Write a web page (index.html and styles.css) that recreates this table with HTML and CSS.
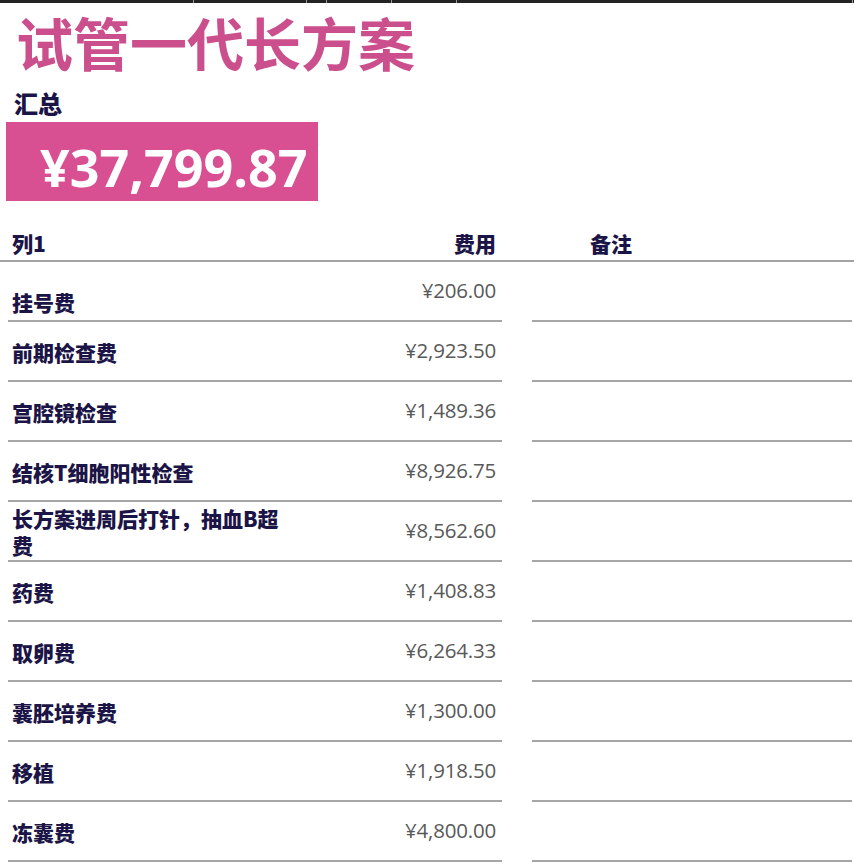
FILE: index.html
```html
<!DOCTYPE html>
<html lang="zh">
<head>
<meta charset="utf-8">
<link rel="stylesheet" href="styles.css">
</head>
<body>
<div class="topbar">
  <span class="seg s1"></span><span class="seg s2"></span><span class="seg s3"></span><span class="seg s4"></span><span class="seg s5"></span><span class="seg s6"></span>
</div>
<h1 class="title">试管一代长方案</h1>
<div class="sum-label">汇总</div>
<div class="total">¥37,799.87</div>

<div class="table">
  <div class="head">
    <div class="c-label">列1</div>
    <div class="c-value">费用</div>
    <div class="c-gap"></div>
    <div class="c-note">备注</div>
  </div>
  <div class="row first">
    <div class="c-label">挂号费</div>
    <div class="c-value">¥206.00</div>
    <div class="c-gap"></div>
    <div class="c-note"></div>
  </div>
  <div class="row">
    <div class="c-label">前期检查费</div>
    <div class="c-value">¥2,923.50</div>
    <div class="c-gap"></div>
    <div class="c-note"></div>
  </div>
  <div class="row">
    <div class="c-label">宫腔镜检查</div>
    <div class="c-value">¥1,489.36</div>
    <div class="c-gap"></div>
    <div class="c-note"></div>
  </div>
  <div class="row">
    <div class="c-label">结核T细胞阳性检查</div>
    <div class="c-value">¥8,926.75</div>
    <div class="c-gap"></div>
    <div class="c-note"></div>
  </div>
  <div class="row">
    <div class="c-label">长方案进周后打针，抽血B超费</div>
    <div class="c-value">¥8,562.60</div>
    <div class="c-gap"></div>
    <div class="c-note"></div>
  </div>
  <div class="row">
    <div class="c-label">药费</div>
    <div class="c-value">¥1,408.83</div>
    <div class="c-gap"></div>
    <div class="c-note"></div>
  </div>
  <div class="row">
    <div class="c-label">取卵费</div>
    <div class="c-value">¥6,264.33</div>
    <div class="c-gap"></div>
    <div class="c-note"></div>
  </div>
  <div class="row">
    <div class="c-label">囊胚培养费</div>
    <div class="c-value">¥1,300.00</div>
    <div class="c-gap"></div>
    <div class="c-note"></div>
  </div>
  <div class="row">
    <div class="c-label">移植</div>
    <div class="c-value">¥1,918.50</div>
    <div class="c-gap"></div>
    <div class="c-note"></div>
  </div>
  <div class="row">
    <div class="c-label">冻囊费</div>
    <div class="c-value">¥4,800.00</div>
    <div class="c-gap"></div>
    <div class="c-note"></div>
  </div>
</div>
</body>
</html>
```

FILE: styles.css
```css
html, body {
  margin: 0;
  padding: 0;
  background: #ffffff;
}
body {
  font-family: "Noto Sans CJK SC", "Open Sans", sans-serif;
  color: #1b1446;
  width: 854px;
  overflow: hidden;
}
.topbar {
  height: 3px;
  background: #232323;
  position: relative;
}
.seg {
  position: absolute;
  top: 0;
  width: 1px;
  height: 3px;
  background: #9a9a9a;
}
.s1 { left: 193px; }
.s2 { left: 306px; }
.s3 { left: 326px; }
.s4 { left: 391px; }
.s5 { left: 456px; }
.s6 { left: 852px; }

.title {
  margin: -3px 0 -5px 0;
  padding-left: 16px;
  font-family: "Noto Sans CJK SC", sans-serif;
  font-weight: 700;
  font-size: 57px;
  line-height: 83px;
  color: #cc4f8d;
}
.sum-label {
  margin-top: 8px;
  padding-left: 14px;
  font-weight: 900;
  font-size: 24px;
  line-height: 34px;
  color: #1b1446;
}
.total {
  margin: 2px 0 0 6px;
  width: 312px;
  height: 79px;
  box-sizing: border-box;
  padding: 12px 0 0 34px;
  background: #d84f92;
  color: #ffffff;
  font-family: "Open Sans", sans-serif;
  font-weight: 700;
  font-size: 52px;
  line-height: 66px;
}

.head, .row {
  display: grid;
  grid-template-columns: 288px 206px 30px 320px;
  padding-left: 8px;
}
.head {
  height: 59px;
  border-bottom: 2px solid #a3a3a3;
  align-items: end;
  font-weight: 900;
  font-size: 21px;
  line-height: 30px;
}
.head > div {
  padding-bottom: 2px;
}
.head .c-label { padding-left: 4px; }
.head .c-value { text-align: right; padding-right: 6px; }
.head .c-note { padding-left: 58px; }

.row {
  height: 60px;
  align-items: stretch;
}
.row .c-label,
.row .c-value,
.row .c-note {
  border-bottom: 2px solid #a6a6a6;
  display: flex;
  align-items: center;
}
.row .c-label {
  padding-left: 4px;
  padding-top: 2px;
  font-weight: 900;
  font-size: 21px;
  line-height: 27px;
  color: #1b1446;
}
.row .c-value {
  justify-content: flex-end;
  padding-right: 6px;
  padding-bottom: 2px;
  font-family: "Open Sans", sans-serif;
  font-size: 20.5px;
  line-height: 28px;
  color: #595959;
  letter-spacing: -0.2px;
}
.row.first .c-label {
  padding-top: 22px;
}
```
